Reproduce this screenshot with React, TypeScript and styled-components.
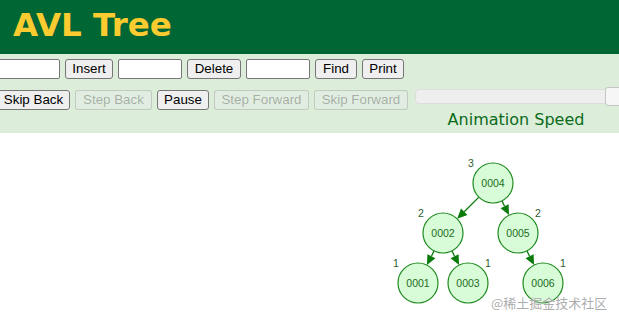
import React from "react";
import styled, { createGlobalStyle } from "styled-components";

const Global = createGlobalStyle`
  html, body { margin: 0; padding: 0; background: #ffffff; overflow: hidden; }
  body { width: 619px; height: 321px; position: relative; }
`;

const Page = styled.div`
  position: relative;
  width: 619px;
  height: 321px;
  overflow: hidden;
`;

const Header = styled.header`
  height: 54px;
  box-sizing: border-box;
  background: #006633;
  padding: 6px 0 0 13px;
`;

const Title = styled.h1`
  margin: 0;
  font-family: "DejaVu Sans", Verdana, sans-serif;
  font-weight: bold;
  font-size: 32.5px;
  line-height: 38px;
  color: #fccb30;
`;

const Controls = styled.div`
  background: #dcedda;
  height: 79px;
  box-sizing: border-box;
  padding-top: 5px;
  display: flex;
  flex-direction: column;
  gap: 10px;
`;

const Row = styled.div<{ $start: number }>`
  display: flex;
  align-items: flex-start;
  gap: 5px;
  margin-left: ${(p) => p.$start}px;
`;

const TextBox = styled.input`
  width: 64px;
  height: 20px;
  box-sizing: border-box;
  border: 1px solid #767676;
  border-radius: 2px;
  background: #ffffff;
  margin: 0;
  padding: 1px 2px;
`;

const Btn = styled.button<{ $w: number; $top?: number }>`
  width: ${(p) => p.$w}px;
  height: 20px;
  box-sizing: border-box;
  margin: ${(p) => p.$top ?? 0}px 0 0 0;
  padding: 0;
  font-family: "Liberation Sans", Arial, sans-serif;
  font-size: 13.333px;
  line-height: 18px;
  color: #000000;
  background: #efefef;
  border: 1px solid #767676;
  border-radius: 3px;
  white-space: nowrap;
  &:disabled {
    color: rgba(16, 16, 16, 0.3);
    background: rgba(239, 239, 239, 0.3);
    border-color: rgba(118, 118, 118, 0.3);
  }
`;

const SpeedGroup = styled.div`
  margin-left: 2px;
  width: 200px;
  display: flex;
  flex-direction: column;
  align-items: center;
`;

const Track = styled.div`
  position: relative;
  width: 200px;
  height: 15px;
  box-sizing: border-box;
  background: #eeeeee;
  border: 1px solid #dddddd;
  border-radius: 4px;
`;

const Handle = styled.div`
  position: absolute;
  left: 189px;
  top: -3px;
  width: 18px;
  height: 19px;
  box-sizing: border-box;
  background: #f6f6f6;
  border: 1px solid #c5c5c5;
  border-radius: 3px;
`;

const SpeedLabel = styled.div`
  margin-top: 6px;
  margin-left: 2px;
  font-family: "DejaVu Sans", Verdana, sans-serif;
  font-size: 16px;
  line-height: 19px;
  color: #0b6b1a;
  white-space: nowrap;
`;

const Canvas = styled.svg`
  display: block;
  width: 619px;
  height: 188px;
`;

const Watermark = styled.div`
  position: absolute;
  left: 491px;
  top: 294px;
  font-family: "Noto Sans CJK SC", "Liberation Sans", sans-serif;
  font-size: 13px;
  line-height: 17px;
  color: rgba(150, 150, 150, 0.8);
  text-shadow: 0 0 1px rgba(255, 255, 255, 0.9);
  white-space: nowrap;
`;

type N = { id: string; x: number; y: number; h: number; side: -1 | 1 };

const nodes: N[] = [
  { id: "0004", x: 493, y: 183, h: 3, side: -1 },
  { id: "0002", x: 443, y: 233, h: 2, side: -1 },
  { id: "0005", x: 518, y: 233, h: 2, side: 1 },
  { id: "0001", x: 418, y: 283, h: 1, side: -1 },
  { id: "0003", x: 468, y: 283, h: 1, side: 1 },
  { id: "0006", x: 543, y: 283, h: 1, side: 1 },
];

const edges: [string, string][] = [
  ["0004", "0002"],
  ["0004", "0005"],
  ["0002", "0001"],
  ["0002", "0003"],
  ["0005", "0006"],
];

const R = 20;
const STROKE = "#1f8a1f";

function Edge({ a, b }: { a: N; b: N }) {
  const dx = b.x - a.x;
  const dy = b.y - a.y;
  const len = Math.hypot(dx, dy);
  const ux = dx / len;
  const uy = dy / len;
  const sx = a.x + ux * R;
  const sy = a.y + uy * R;
  const ex = b.x - ux * R;
  const ey = b.y - uy * R;
  const al = 10;
  const aw = 4.5;
  const bx = ex - ux * al;
  const by = ey - uy * al;
  const px = -uy;
  const py = ux;
  const pts = `${ex},${ey} ${bx + px * aw},${by + py * aw} ${bx - px * aw},${by - py * aw}`;
  return (
    <g>
      <line x1={sx} y1={sy} x2={bx} y2={by} stroke="#0a7a0a" strokeWidth={1.3} />
      <polygon points={pts} fill="#0a7a0a" />
    </g>
  );
}

export default function App() {
  const byId = Object.fromEntries(nodes.map((n) => [n.id, n]));
  return (
    <Page>
      <Global />
      <Header>
        <Title>AVL Tree</Title>
      </Header>
      <Controls>
        <Row $start={-4}>
          <TextBox type="text" />
          <Btn $w={48}>Insert</Btn>
          <TextBox type="text" />
          <Btn $w={54}>Delete</Btn>
          <TextBox type="text" />
          <Btn $w={42}>Find</Btn>
          <Btn $w={42}>Print</Btn>
        </Row>
        <Row $start={-3}>
          <Btn $w={73} $top={1}>Skip Back</Btn>
          <Btn $w={77} $top={1} disabled>
            Step Back
          </Btn>
          <Btn $w={52} $top={1}>Pause</Btn>
          <Btn $w={95} $top={1} disabled>
            Step Forward
          </Btn>
          <Btn $w={94} $top={1} disabled>
            Skip Forward
          </Btn>
          <SpeedGroup>
            <Track>
              <Handle />
            </Track>
            <SpeedLabel>Animation Speed</SpeedLabel>
          </SpeedGroup>
        </Row>
      </Controls>
      <Canvas viewBox="0 133 619 188">
        {edges.map(([p, c]) => (
          <Edge key={p + c} a={byId[p]} b={byId[c]} />
        ))}
        {nodes.map((n) => (
          <g key={n.id}>
            <circle cx={n.x} cy={n.y} r={R} fill="#d8fbd8" stroke={STROKE} strokeWidth={1.2} />
            <text
              x={n.x}
              y={n.y + 3.8}
              textAnchor="middle"
              fontFamily="'Liberation Sans', Arial, sans-serif"
              fontSize={10.5}
              fill="#1b6e1b"
            >
              {n.id}
            </text>
            <text
              x={n.side < 0 ? n.x - 22 : n.x + 20}
              y={n.y - 16}
              textAnchor="middle"
              fontFamily="'Liberation Sans', Arial, sans-serif"
              fontSize={10.5}
              fill="#2d5e2d"
            >
              {n.h}
            </text>
          </g>
        ))}
      </Canvas>
      <Watermark>@稀土掘金技术社区</Watermark>
    </Page>
  );
}
